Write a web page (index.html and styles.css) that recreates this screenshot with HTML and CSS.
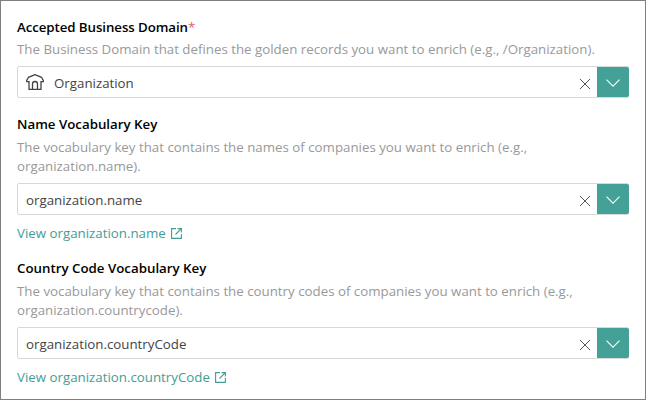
FILE: index.html
```html
<!DOCTYPE html>
<html lang="en">
<head>
<meta charset="utf-8">
<title>Enrichment settings</title>
<link rel="stylesheet" href="styles.css">
</head>
<body>
<svg class="defs" width="0" height="0">
  <symbol id="clear" viewBox="0 0 12 12"><path d="M1 1l10 10M11 1L1 11"/></symbol>
  <symbol id="chevron" viewBox="0 0 14 8"><path d="M.5.7L7 7.200l6.500-6.500"/></symbol>
  <symbol id="external" viewBox="0 0 11 11"><path d="M5 .6H.6v9.800h9.800V6M6.500.6h3.900v3.900M10.400.6L4.500 6.500"/></symbol>
</svg>
<main class="form">
  <section class="field">
    <div class="label"><span class="label-one">Accepted Business Domain</span><span class="required">*</span></div>
    <p class="hint">The Business Domain that defines the golden records you want to enrich (e.g., /Organization).</p>
    <div class="select">
      <svg class="home" viewBox="0 0 20 18"><path d="M9 1.700L2.500 4.300.7 7.500v1.200H3V16.300H6.500V11a2.500 2.500 0 0 1 5 0v5.300H15V8.700h2.300V7.500L15.500 4.300zM6.500 16.300h5"/></svg>
      <span class="value">Organization</span>
      <svg class="clear"><use href="#clear"/></svg>
      <span class="toggle"><svg class="chevron"><use href="#chevron"/></svg></span>
    </div>
  </section>
  <section class="field">
    <div class="label label-raised">Name Vocabulary Key</div>
    <p class="hint">The vocabulary key that contains the names of companies you want to enrich (e.g.,<br>organization.name).</p>
    <div class="select">
      <span class="value">organization.name</span>
      <svg class="clear"><use href="#clear"/></svg>
      <span class="toggle"><svg class="chevron"><use href="#chevron"/></svg></span>
    </div>
    <a class="link">View organization.name<svg class="external"><use href="#external"/></svg></a>
  </section>
  <section class="field">
    <div class="label label-raised">Country Code Vocabulary Key</div>
    <p class="hint">The vocabulary key that contains the country codes of companies you want to enrich (e.g.,<br>organization.countrycode).</p>
    <div class="select">
      <span class="value">organization.countryCode</span>
      <svg class="clear"><use href="#clear"/></svg>
      <span class="toggle"><svg class="chevron"><use href="#chevron"/></svg></span>
    </div>
    <a class="link">View organization.countryCode<svg class="external"><use href="#external"/></svg></a>
  </section>
</main>
</body>
</html>
```
FILE: styles.css
```css
* { box-sizing: border-box; }
body { margin: 0; background: #fff; font-family: "Open Sans", "Noto Sans", sans-serif; font-size: 13.3px; }
svg { fill: none; stroke: currentColor; flex: none; }
.defs { display: block; position: absolute; }
.form { height: 400px; border: 1px solid #7f7f7f; padding: 16px; display: flex; flex-direction: column; gap: 17px; overflow: hidden; }
.label { height: 20px; line-height: 20px; font-weight: 600; color: #000; white-space: nowrap; }
.label-raised { line-height: 18px; }
.label-one { letter-spacing: -.08px; }
.required { color: #e06060; font-weight: 400; }
.hint { margin: 3px 0 7px; line-height: 19px; color: #999; white-space: nowrap; }
.select { height: 32px; border: 1px solid #d4d9d9; border-radius: 2px; display: flex; align-items: center; color: #444; padding-left: 8px; }
.home { width: 20px; height: 18px; margin-right: 8px; stroke-width: 1.3; }
.value { flex: 1; padding-top: 2px; white-space: nowrap; }
.clear { width: 12px; height: 12px; margin: 3px 6px 0 0; color: #555; stroke-width: 1; }
.toggle { width: 32px; height: 30px; margin-right: -1px; background: #43a198; border-radius: 0 2px 2px 0; color: #fff; display: flex; align-items: center; justify-content: center; }
.chevron { width: 14px; height: 8px; margin-top: 2px; stroke-width: 1.1; }
.link { display: flex; align-items: center; margin: 9px 0 1px; height: 17px; color: #3f9e95; white-space: nowrap; }
.external { width: 11px; height: 11px; margin: 2px 0 0 5px; stroke-width: 1.1; }
```
